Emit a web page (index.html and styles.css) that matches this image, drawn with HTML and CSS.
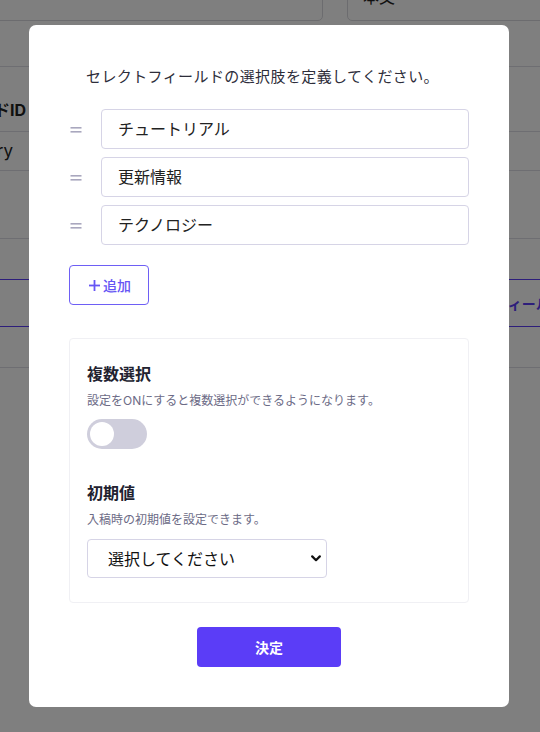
FILE: index.html
```html
<!DOCTYPE html>
<html lang="ja">
<head>
<meta charset="utf-8">
<title>選択肢の定義</title>
<link rel="stylesheet" href="styles.css">
</head>
<body>
<div class="page">
  <div class="top">
    <div class="bg-input bg-input-left"></div>
    <div class="bg-input bg-input-right"><span class="bg-input-text">本文</span></div>
  </div>
  <div class="bg-row r1"></div>
  <div class="bg-row r2"><div class="cut"><span class="bg-bold">フィールドID</span></div></div>
  <div class="bg-row r3"><div class="cut cut-ry"><span class="bg-text">category</span></div></div>
  <div class="bg-row r4"></div>
  <div class="bg-row r5"></div>
  <div class="bg-row r6"><span class="bg-link">フィールドを追加</span></div>
  <div class="bg-row r7"></div>
</div>

<div class="overlay">
  <div class="modal">
    <p class="modal-title">セレクトフィールドの選択肢を定義してください。</p>
    <div class="options">
      <div class="option">
        <span class="handle"><svg width="12" height="8" viewBox="0 0 12 8"><rect x="0.5" y="1" width="11" height="1.6" fill="#a9a7be"/><rect x="0.5" y="5" width="11" height="1.6" fill="#a9a7be"/></svg></span>
        <div class="text-input">チュートリアル</div>
      </div>
      <div class="option">
        <span class="handle"><svg width="12" height="8" viewBox="0 0 12 8"><rect x="0.5" y="1" width="11" height="1.6" fill="#a9a7be"/><rect x="0.5" y="5" width="11" height="1.6" fill="#a9a7be"/></svg></span>
        <div class="text-input">更新情報</div>
      </div>
      <div class="option">
        <span class="handle"><svg width="12" height="8" viewBox="0 0 12 8"><rect x="0.5" y="1" width="11" height="1.6" fill="#a9a7be"/><rect x="0.5" y="5" width="11" height="1.6" fill="#a9a7be"/></svg></span>
        <div class="text-input">テクノロジー</div>
      </div>
    </div>
    <button class="add-btn"><svg class="plus" width="11" height="11" viewBox="0 0 11 11"><rect x="4.6" y="0" width="1.8" height="11" fill="#6655f4"/><rect x="0" y="4.6" width="11" height="1.8" fill="#6655f4"/></svg><span>追加</span></button>

    <div class="settings">
      <h3 class="set-title">複数選択</h3>
      <p class="set-desc">設定をONにすると複数選択ができるようになります。</p>
      <div class="toggle"><span class="knob"></span></div>
      <h3 class="set-title set-title-2">初期値</h3>
      <p class="set-desc">入稿時の初期値を設定できます。</p>
      <div class="select-wrap">
        <div class="select">選択してください</div>
        <svg class="chevron" width="10" height="7" viewBox="0 0 10 7"><path d="M1.2 1.4 L5 5.2 L8.8 1.4" fill="none" stroke="#111" stroke-width="2.2" stroke-linecap="round" stroke-linejoin="round"/></svg>
      </div>
    </div>

    <div class="actions">
      <button class="submit">決定</button>
    </div>
  </div>
</div>
</body>
</html>
```
FILE: styles.css
```css
* { box-sizing: border-box; }
html, body { margin: 0; padding: 0; }
body {
  width: 540px;
  height: 732px;
  overflow: hidden;
  background: #fff;
  font-family: Inter, "Noto Sans CJK JP", sans-serif;
  color: #222;
}

/* background page */
.page { width: 540px; overflow: hidden; }
.top {
  display: flex;
  height: 21px;
}
.bg-input {
  flex-shrink: 0;
  height: 41px;
  margin-top: -20px;
  border: 1px solid #d9d9de;
  border-radius: 5px;
  background: #fff;
}
.bg-input-left { width: 333px; margin-left: -10px; }
.bg-input-right { width: 220px; margin-left: 24px; padding-left: 15px; padding-top: 4px; }
.bg-input-text { font-size: 16px; line-height: 24px; color: #222; }
.bg-row {
  border-bottom: 1px solid #dcdce4;
  display: flex;
  align-items: center;
}
.r1 { height: 46px; }
.r2 { height: 65px; align-items: flex-end; padding-bottom: 9px; }
.r3 { height: 39px; }
.r4 { height: 68px; }
.r5 { height: 41px; border-bottom-color: #5b3df7; }
.r6 { height: 47px; border-bottom-color: #5b3df7; }
.r7 { height: 41px; }
.cut {
  width: 26px;
  flex-shrink: 0;
  display: flex;
  justify-content: flex-end;
  overflow: hidden;
  white-space: nowrap;
}
.cut-ry { width: 13px; }
.bg-bold { font-weight: 700; font-size: 16px; color: #222; line-height: 24px; }
.bg-text { font-size: 17px; color: #222; line-height: 24px; }
.bg-link {
  margin-left: 494px;
  white-space: nowrap;
  font-size: 14px;
  font-weight: 600;
  color: #5b3df7;
}

/* overlay + modal */
.overlay {
  position: fixed;
  inset: 0;
  background: rgba(0, 0, 0, 0.5);
  display: flex;
  align-items: center;
  justify-content: center;
  padding-right: 2px;
}
.modal {
  width: 480px;
  height: 682px;
  background: #fff;
  border-radius: 7px;
  padding: 40px 40px 40px 40px;
}
.modal-title {
  margin: 0 0 20px 17px;
  font-size: 15px;
  line-height: 24px;
  color: #2d2d3a;
  letter-spacing: 0.4px;
}
.options { display: flex; flex-direction: column; gap: 8px; }
.option { display: flex; align-items: center; }
.handle {
  width: 32px;
  display: flex;
  align-items: center;
  padding-left: 1px;
  padding-top: 1px;
}
.text-input {
  flex: 1;
  height: 40px;
  border: 1px solid #d6d4e6;
  border-radius: 4px;
  padding-left: 16px;
  font-size: 16px;
  line-height: 38px;
  color: #222;
}
.add-btn {
  margin-top: 20px;
  width: 80px;
  height: 40px;
  border: 1px solid #6e5ff5;
  border-radius: 4px;
  background: #fff;
  color: #6655f4;
  font-family: Inter, "Noto Sans CJK JP", sans-serif;
  font-size: 14px;
  font-weight: 500;
  display: flex;
  align-items: center;
  justify-content: center;
  gap: 3px;
  padding: 0 0 0 2px;
}
.plus { display: block; }

.settings {
  margin-top: 33px;
  height: 265px;
  border: 1px solid #f0f0f4;
  border-radius: 4px;
  padding: 23px 17px 0 17px;
}
.set-title {
  margin: 0;
  font-size: 16px;
  line-height: 24px;
  font-weight: 700;
  color: #222230;
}
.set-title-2 { margin-top: 32px; }
.set-desc {
  margin: 6px 0 0 0;
  font-size: 12px;
  line-height: 18px;
  color: #6c6b86;
}
.toggle {
  margin-top: 9px;
  width: 60px;
  height: 30px;
  border-radius: 15px;
  background: #cfcedc;
  padding: 3px;
}
.knob {
  display: block;
  width: 24px;
  height: 24px;
  border-radius: 50%;
  background: #fff;
}
.select-wrap {
  position: relative;
  margin-top: 10px;
  width: 240px;
}
.select {
  height: 39px;
  border: 1px solid #d6d4e6;
  border-radius: 4px;
  padding-left: 20px;
  font-family: "Noto Sans CJK JP", sans-serif;
  font-size: 16px;
  line-height: 37px;
  color: #111;
}
.chevron {
  position: absolute;
  right: 6px;
  top: 16px;
}
.actions {
  margin-top: 24px;
  display: flex;
  justify-content: center;
}
.submit {
  width: 144px;
  height: 40px;
  border: none;
  border-radius: 4px;
  background: #5b3df7;
  color: #fff;
  font-family: Inter, "Noto Sans CJK JP", sans-serif;
  font-size: 14px;
  font-weight: 700;
}
```
